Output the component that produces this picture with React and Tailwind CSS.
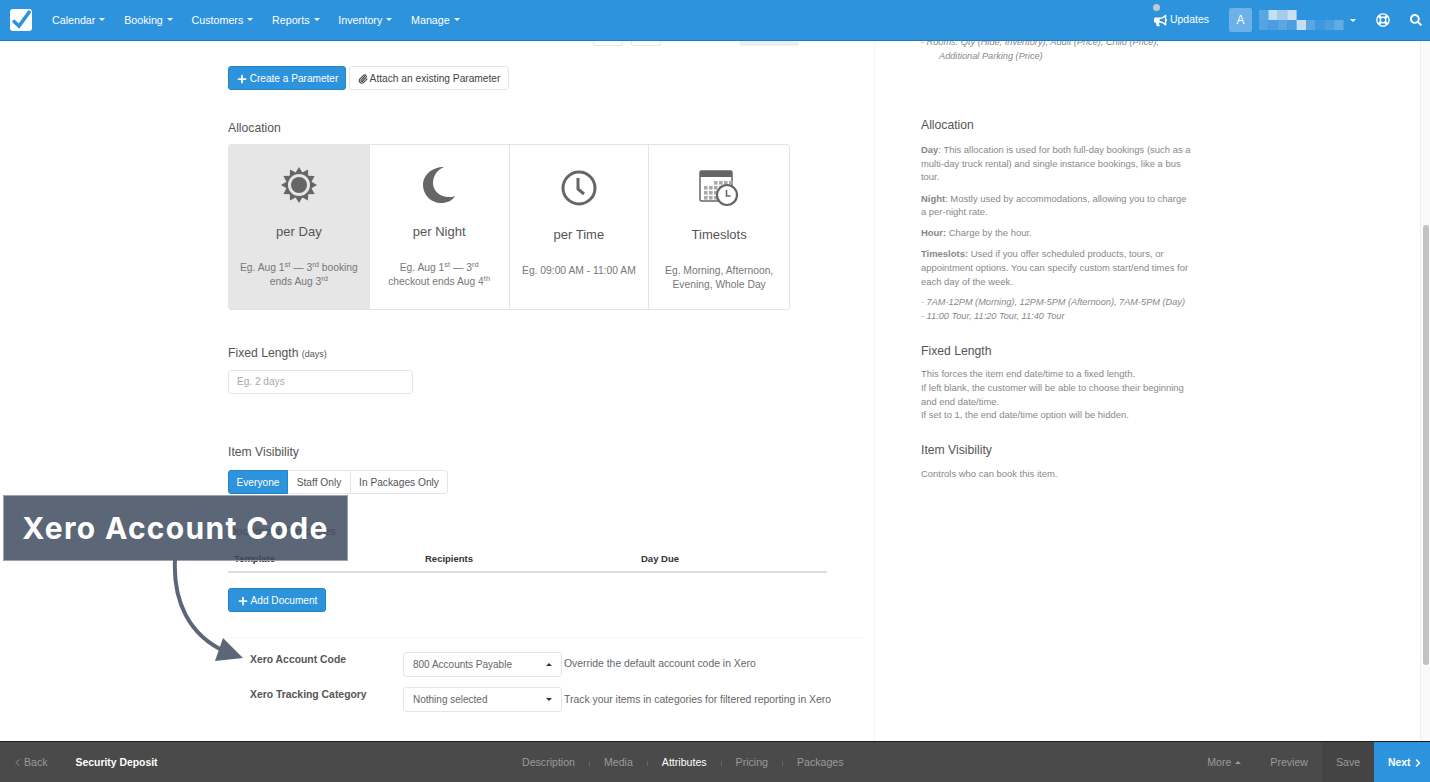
import { ChevronLeft, ChevronRight, Paperclip, Plus } from "lucide-react";
import { FaBullhorn, FaRegLifeRing, FaSearch } from "react-icons/fa";

const navItems = ["Calendar", "Booking", "Customers", "Reports", "Inventory", "Manage"];

function Caret({ up, className = "" }) {
  return (
    <span
      className={`inline-block w-0 h-0 border-x-[3px] border-x-transparent ${
        up ? "border-b-[3px] border-b-current" : "border-t-[3px] border-t-current"
      } ${className}`}
    />
  );
}

function SunIcon() {
  const points = [];
  for (let i = 0; i < 24; i++) {
    const r = i % 2 === 0 ? 18 : 13;
    const a = (i * Math.PI) / 12;
    points.push(`${18 + r * Math.sin(a)},${18 - r * Math.cos(a)}`);
  }
  return (
    <svg width="36" height="36" viewBox="0 0 36 36">
      <polygon points={points.join(" ")} fill="#666" />
      <circle cx="18" cy="18" r="11" fill="#e6e6e6" />
      <circle cx="18" cy="18" r="8" fill="#666" />
    </svg>
  );
}

function MoonIcon() {
  return (
    <svg width="34" height="36" viewBox="0 0 34 36">
      <path d="M22 0C10 0 1 8 1 18c0 10 8 18 18 18 6 0 11-2 14-7-2 1-4 1-6 1-9 0-16-6-16-14 0-7 4-13 11-16z" fill="#666" />
    </svg>
  );
}

function ClockIcon() {
  return (
    <svg width="36" height="36" viewBox="0 0 36 36" fill="none" stroke="#666">
      <circle cx="18" cy="18" r="16" strokeWidth="3" />
      <path d="M17 8v11l6 5" strokeWidth="3" />
    </svg>
  );
}

function CalendarClockIcon() {
  const cells = [];
  for (let r = 0; r < 4; r++) {
    for (let c = 0; c < 6; c++) {
      if (r === 0 && c < 2) continue;
      cells.push(<rect key={`${r}-${c}`} x={5 + c * 5} y={11 + r * 5} width="3.6" height="3.6" fill="#aaa" />);
    }
  }
  return (
    <svg width="40" height="37" viewBox="0 0 40 37">
      <rect x="1" y="1" width="32" height="30" rx="1.5" fill="#fff" stroke="#666" strokeWidth="1.5" />
      <rect x="1" y="1" width="32" height="6" fill="#666" />
      {cells}
      <circle cx="28" cy="25" r="10" fill="#fff" stroke="#666" strokeWidth="2.2" />
      <path d="M27.5 20v6h4" fill="none" stroke="#666" strokeWidth="1.6" />
    </svg>
  );
}

function BlurredName() {
  const top = ["#5aa6e3", "#c4def3", "#a4cbec", "#c9e1f4"];
  const bottom = ["#56a3e2", "#4c9ee0", "#5aa6e3", "#4c9ee0", "#c4def3", "#5aa6e3", "#3f98de", "#4c9ee0", "#63abe4"];
  return (
    <svg width="85" height="20" viewBox="0 0 85 20">
      {top.map((c, i) => (
        <rect key={i} x={i * 9.4} y="0" width="9.4" height="10" fill={c} />
      ))}
      {bottom.map((c, i) => (
        <rect key={i} x={i * 9.4} y="10" width="9.4" height="10" fill={c} />
      ))}
    </svg>
  );
}

function BlueButton({ children, className = "" }) {
  return (
    <button className={`h-6 pt-px flex items-center justify-center gap-[2px] rounded-[3px] bg-[#2d93dd] border border-[#2583c8] text-white text-[10.1px] ${className}`}>
      <Plus size={12} strokeWidth={3.5} />
      {children}
    </button>
  );
}

function AllocationCard({ icon, title, selected, top, width, children, last }) {
  return (
    <div className={`${width} flex flex-col items-center ${top} ${selected ? "bg-[#e6e6e6]" : ""} ${last ? "" : "border-r border-[#e4e4e4]"}`}>
      <div className="h-9 flex items-center justify-center">{icon}</div>
      <div className="mt-[21px] text-[13px] leading-4 text-[#555]">{title}</div>
      <div className="mt-[21px] text-[10.3px] leading-[14px] text-[#777] text-center">{children}</div>
    </div>
  );
}

function SelectBox({ label, up }) {
  return (
    <div className="w-[159px] h-[25px] flex items-center justify-between pl-[9px] pr-[9px] border border-[#e5e5e5] rounded-[3px] text-[10px] text-[#666]">
      <span>{label}</span>
      <Caret up={up} className="text-[#333]" />
    </div>
  );
}

function Sep() {
  return <span className="w-px h-[5px] bg-[#666] mt-[2px]" />;
}

export default function App() {
  return (
    <div className="relative w-[1430px] h-[782px] flex flex-col overflow-hidden bg-white font-['Liberation_Sans',Arial,sans-serif]">
      {/* Top nav */}
      <header className="relative z-10 h-[41px] shrink-0 flex items-center bg-[#2d93dd] border-b border-[#1f7cc0] text-white">
        <div className="ml-[10px] w-[22px] h-[22px] rounded-[3px] bg-white flex items-center justify-center overflow-visible">
          <svg width="22" height="22" viewBox="0 0 22 22" className="overflow-visible">
            <path d="M3 11.5l6 5.5L20 2" fill="none" stroke="#2d93dd" strokeWidth="3.6" />
          </svg>
        </div>
        <nav className="ml-[20px] flex gap-[18.8px] text-[10.7px]">
          {navItems.map((item) => (
            <span key={item} className="flex items-center gap-[4px]">
              {item}
              <Caret />
            </span>
          ))}
        </nav>
        <div className="ml-auto relative flex items-center gap-[3px] text-[10.5px]">
          <span className="absolute -top-[8px] left-[-1px] w-[7px] h-[7px] rounded-full bg-[#c2c9cf]" />
          <FaBullhorn size={13} />
          Updates
        </div>
        <div className="ml-[20px] w-[23px] h-[24px] rounded-[2px] bg-[#6cb1e8] flex items-center justify-center text-[12px]">A</div>
        <div className="ml-[7px]">
          <BlurredName />
        </div>
        <Caret className="ml-[6px]" />
        <FaRegLifeRing size={14} className="ml-[20px]" />
        <FaSearch size={12} className="ml-[20px] mr-[8px]" />
      </header>

      <main className="flex flex-1 min-h-0 overflow-hidden">
        {/* Form column */}
        <div className="w-[874px] shrink-0 pl-[228px] text-[#555]">
          <div className="ml-[365px] h-[5px] flex">
            <span className="w-[30px] border border-t-0 border-[#e5e5e5] rounded-b-[3px]" />
            <span className="ml-[8px] w-[30px] border border-t-0 border-[#e5e5e5] rounded-b-[3px]" />
            <span className="ml-[78px] w-[60px] bg-[#eee] rounded-b-[3px]" />
          </div>
          <div className="mt-[20px] flex gap-[3px]">
            <BlueButton className="w-[118px]">Create a Parameter</BlueButton>
            <button className="w-[160px] h-6 pt-px flex items-center justify-center gap-[2px] rounded-[3px] border border-[#e5e5e5] text-[10.2px] text-[#444]">
              <Paperclip size={10} strokeWidth={2.6} />
              Attach an existing Parameter
            </button>
          </div>

          <h3 className="mt-[30px] text-[12.2px] leading-4">Allocation</h3>
          <div className="mt-[8px] w-[562px] h-[166px] flex border border-[#e4e4e4] rounded-[3px] overflow-hidden">
            <AllocationCard icon={<SunIcon />} title="per Day" selected top="pt-[22px]" width="w-[141px]">
              Eg. Aug 1<sup className="text-[7.5px]">st</sup> — 3<sup className="text-[7.5px]">rd</sup> booking
              <br />
              ends Aug 3<sup className="text-[7.5px]">rd</sup>
            </AllocationCard>
            <AllocationCard icon={<MoonIcon />} title="per Night" top="pt-[22px]" width="w-[140px]">
              Eg. Aug 1<sup className="text-[7.5px]">st</sup> — 3<sup className="text-[7.5px]">rd</sup>
              <br />
              checkout ends Aug 4<sup className="text-[7.5px]">th</sup>
            </AllocationCard>
            <AllocationCard icon={<ClockIcon />} title="per Time" top="pt-[25px]" width="w-[140px]">
              Eg. 09:00 AM - 11:00 AM
            </AllocationCard>
            <AllocationCard icon={<CalendarClockIcon />} title="Timeslots" top="pt-[25px]" width="w-[140px]" last>
              Eg. Morning, Afternoon,
              <br />
              Evening, Whole Day
            </AllocationCard>
          </div>

          <h3 className="mt-[35px] text-[12.2px] leading-4">
            Fixed Length <span className="text-[9px] text-[#555]">(days)</span>
          </h3>
          <div className="mt-[8px] w-[185px] h-6 flex items-center pl-[8px] border border-[#e5e5e5] rounded-[3px] text-[10.1px] text-[#aaa]">
            Eg. 2 days
          </div>

          <h3 className="mt-[50px] text-[12.2px] leading-4">Item Visibility</h3>
          <div className="mt-[10px] flex h-6 pt-0 text-[10.2px]">
            <span className="w-[60px] pt-px flex items-center justify-center bg-[#2d93dd] border border-[#2583c8] rounded-l-[3px] text-white">Everyone</span>
            <span className="w-[62px] pt-px flex items-center justify-center border-y border-[#e5e5e5]">Staff Only</span>
            <span className="w-[98px] pt-px flex items-center justify-center border border-[#e5e5e5] rounded-r-[3px]">In Packages Only</span>
          </div>

          <h3 className="mt-[29px] text-[11.5px] leading-4">Document Templates</h3>
          <div className="mt-[11px] w-[599px] h-[23px] pl-[6px] pb-[2px] flex items-center border-b-2 border-[#ddd] text-[9.5px] font-bold text-[#333]">
            <span className="w-[191px]">Template</span>
            <span className="w-[216px]">Recipients</span>
            <span>Day Due</span>
          </div>
          <BlueButton className="mt-[15px] w-[98px]">Add Document</BlueButton>

          <div className="mt-[25px] w-[637px] h-px bg-[#f6f6f6]" />
          <div className="mt-[14px] flex items-start">
            <span className="ml-[22px] w-[153px] text-[10.4px] leading-4 font-bold text-[#555]">Xero Account Code</span>
            <SelectBox label="800 Accounts Payable" up />
            <span className="ml-[2px] mt-[4px] text-[10.4px] leading-4 text-[#666]">Override the default account code in Xero</span>
          </div>
          <div className="mt-[10px] flex items-start">
            <span className="ml-[22px] w-[153px] text-[10.4px] leading-4 font-bold text-[#555]">Xero Tracking Category</span>
            <SelectBox label="Nothing selected" />
            <span className="ml-[2px] mt-[5px] text-[10.4px] leading-4 text-[#666]">Track your items in categories for filtered reporting in Xero</span>
          </div>
        </div>

        {/* Help column */}
        <aside className="flex-1 -mt-[5px] pl-[46px] pr-[228px] border-l border-[#f6f6f6] text-[9.45px] leading-[13.7px] text-[#888]">
          <p className="italic text-[9.2px] whitespace-nowrap">- Rooms: Qty (Hide, Inventory), Adult (Price), Child (Price),</p>
          <p className="italic text-[9.2px] pl-[18px]">Additional Parking (Price)</p>

          <h4 className="mt-[54px] mb-[9.5px] text-[12.2px] leading-4 text-[#555]">Allocation</h4>
          <p className="mb-[7.5px]">
            <b>Day</b>: This allocation is used for both full-day bookings (such as a multi-day truck rental) and single instance bookings, like a bus tour.
          </p>
          <p className="mb-[7.5px]">
            <b>Night</b>: Mostly used by accommodations, allowing you to charge a per-night rate.
          </p>
          <p className="mb-[7px]">
            <b>Hour:</b> Charge by the hour.
          </p>
          <p className="mb-[8px]">
            <b>Timeslots:</b> Used if you offer scheduled products, tours, or appointment options. You can specify custom start/end times for each day of the week.
          </p>
          <p className="italic text-[9.2px] whitespace-nowrap">- 7AM-12PM (Morning), 12PM-5PM (Afternoon), 7AM-5PM (Day)</p>
          <p className="italic text-[9.2px]">- 11:00 Tour, 11:20 Tour, 11:40 Tour</p>

          <h4 className="mt-[19.5px] mb-[8px] text-[12.2px] leading-4 text-[#555]">Fixed Length</h4>
          <p>This forces the item end date/time to a fixed length.</p>
          <p>If left blank, the customer will be able to choose their beginning and end date/time.</p>
          <p>If set to 1, the end date/time option will be hidden.</p>

          <h4 className="mt-[20.5px] mb-[8.5px] text-[12.2px] leading-4 text-[#555]">Item Visibility</h4>
          <p>Controls who can book this item.</p>
        </aside>

        {/* Scrollbar */}
        <div className="w-[10px] shrink-0 border-l border-[#efefef] bg-[#fafafa] pt-[184px] pl-[2px]">
          <div className="w-[6px] h-[440px] rounded-full bg-[#c2c2c2]" />
        </div>
      </main>

      {/* Bottom bar */}
      <footer className="relative h-[41px] shrink-0 flex items-center pt-[2px] bg-[#4a4a4a] border-t border-[#1c1c1c] text-[10.6px] text-[#9a9a9a]">
        <span className="ml-[12px] flex items-center gap-[1px]">
          <ChevronLeft size={11} />
          Back
        </span>
        <span className="ml-[28px] font-bold text-[10.4px] text-white">Security Deposit</span>
        <nav className="absolute left-[522px] flex items-center gap-[14px]">
          <span>Description</span>
          <Sep />
          <span>Media</span>
          <Sep />
          <span className="text-white">Attributes</span>
          <Sep />
          <span>Pricing</span>
          <Sep />
          <span>Packages</span>
        </nav>
        <span className="ml-auto flex items-center gap-[4px]">
          More
          <Caret up />
        </span>
        <span className="ml-[29px] mr-[14px]">Preview</span>
        <span className="w-[52px] self-stretch -mt-[2px] pt-[2px] flex items-center justify-center bg-[#444]">Save</span>
        <span className="w-[56px] self-stretch -mt-[2px] pt-[2px] flex items-center gap-[1px] pl-[14px] bg-[#2d93dd] text-white font-bold text-[10.4px]">
          Next
          <ChevronRight size={12} strokeWidth={3} />
        </span>
      </footer>

      {/* Annotation callout over the page */}
      <div className="absolute left-[3px] top-[495px] w-[345px] h-[66px] flex items-center justify-center bg-[#3e4b5e]/85 border border-[#9aa3ae] font-['Inter',sans-serif] text-[30px] font-bold tracking-[1.3px] text-white">
        Xero Account Code
      </div>
      <svg className="absolute left-[160px] top-[560px]" width="90" height="105" viewBox="0 0 90 105">
        <path d="M15 0C13 40 28 75 66 92" fill="none" stroke="#5b6676" strokeWidth="4" />
        <polygon points="55,101 63,78 83,98" fill="#5b6676" />
      </svg>
    </div>
  );
}
